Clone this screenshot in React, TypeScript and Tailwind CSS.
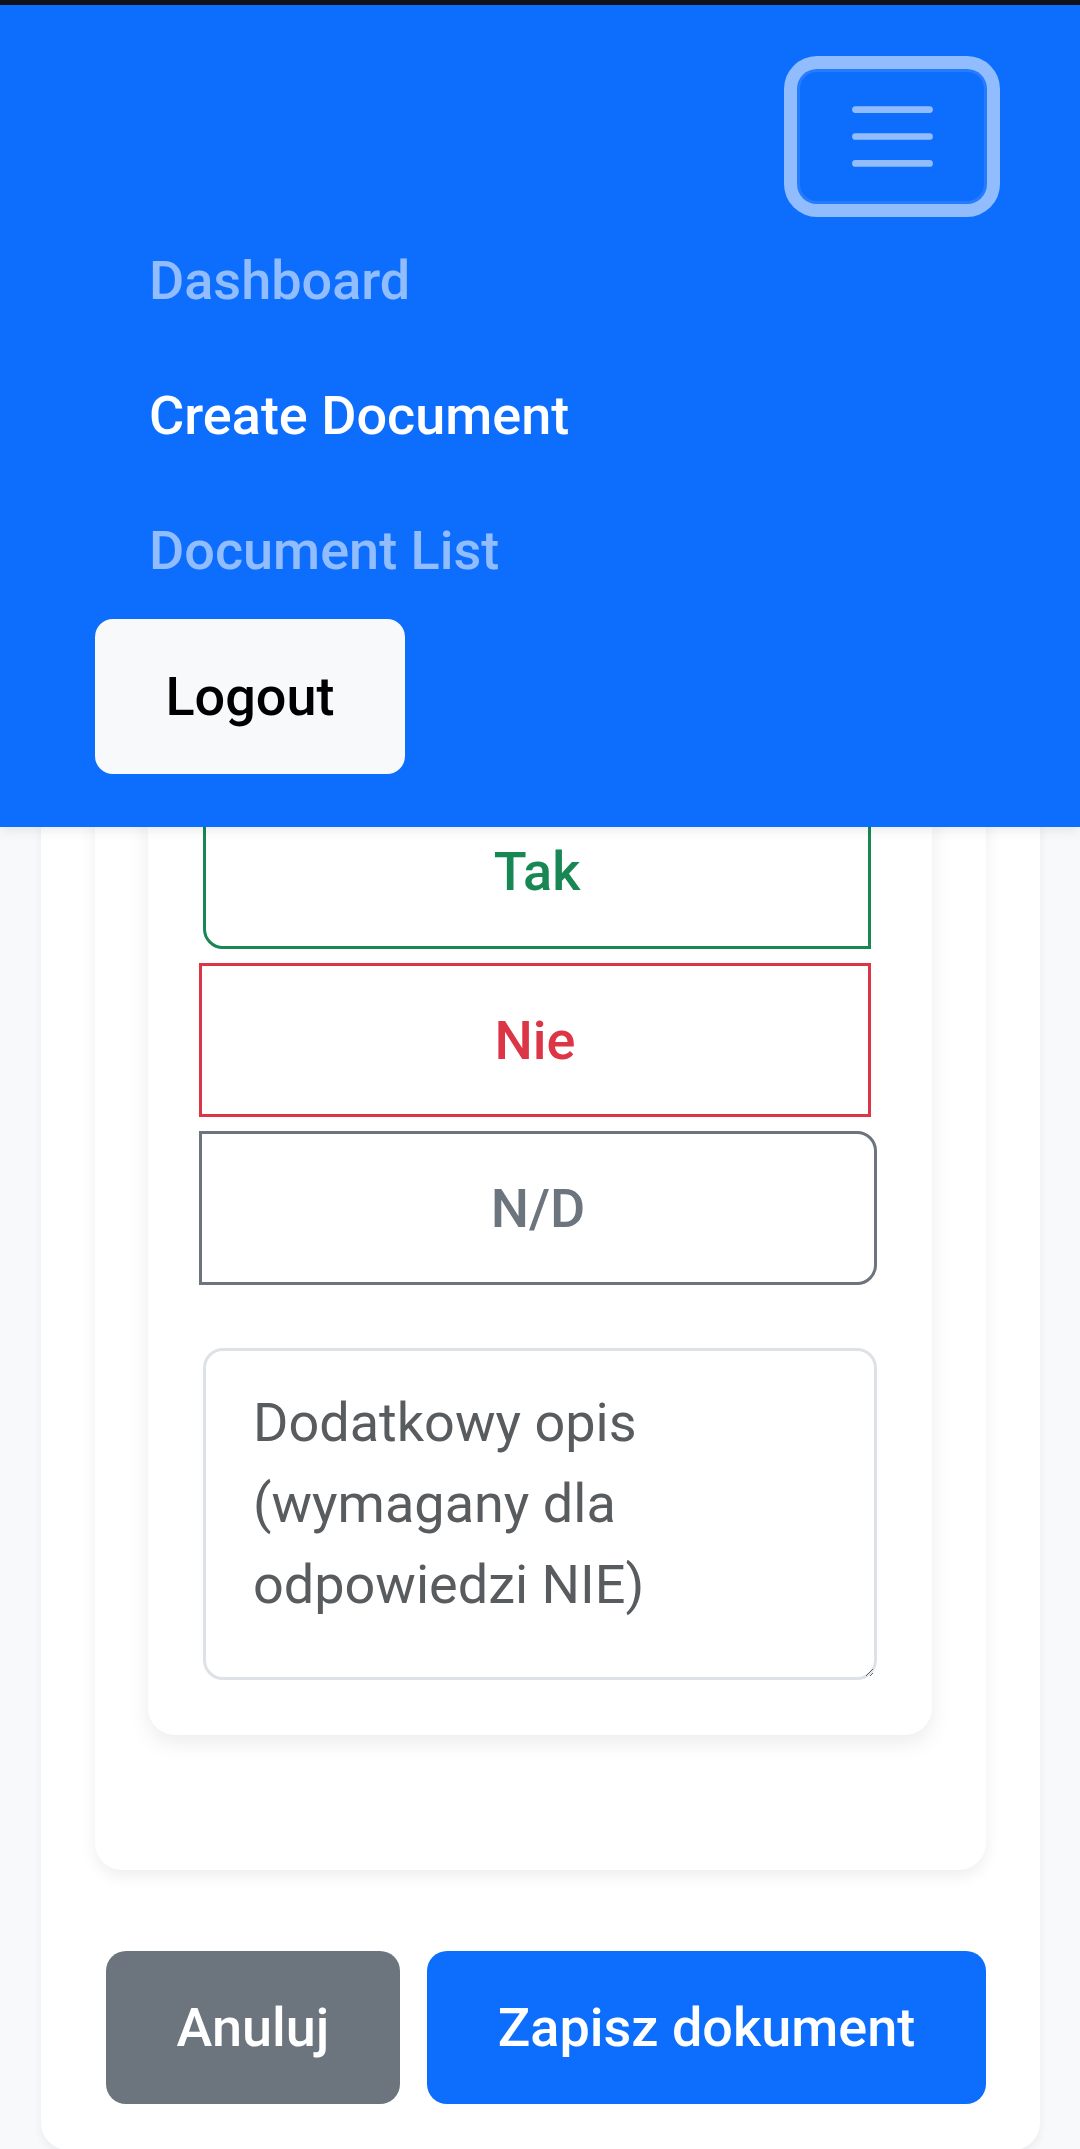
export default function App() {
  const linkBase = "pl-[54px] py-[27px] text-[54px] leading-[81px] font-medium";
  return (
    <div className="min-h-[2149px] bg-[#f8f9fa] font-['Roboto','Liberation_Sans',sans-serif] overflow-hidden">
      <div className="h-[5px] bg-[#10131a]" />
      <nav className="relative z-10 bg-[#0d6efd] pt-[64px] pb-[53px] pl-[95px] pr-[93px] shadow-[0_4px_12px_rgba(0,0,0,0.08)]">
        <div className="flex justify-end">
          <button className="w-[190px] h-[135px] flex items-center justify-center rounded-[20px] border-[3px] border-[rgba(255,255,255,0.1)] shadow-[0_0_0_13px_rgba(255,255,255,0.55)]">
            <svg width="101" height="101" viewBox="0 0 30 30" fill="none">
              <path
                d="M4 7h22M4 15h22M4 23h22"
                stroke="rgba(255,255,255,0.55)"
                strokeWidth="2"
                strokeLinecap="round"
                strokeMiterlimit="10"
              />
            </svg>
          </button>
        </div>
        <ul className="mt-[9px]">
          <li className={`${linkBase} text-[rgba(255,255,255,0.55)]`}>Dashboard</li>
          <li className={`${linkBase} text-white`}>Create Document</li>
          <li className={`${linkBase} text-[rgba(255,255,255,0.55)]`}>Document List</li>
        </ul>
        <button className="mt-px w-[310px] h-[155px] rounded-[18px] bg-[#f8f9fa] text-black text-[54px] leading-[81px] font-medium">
          Logout
        </button>
      </nav>

      <main className="relative -mt-[196px] pl-[41px] pr-[40px]">
        <div className="rounded-[27px] bg-white shadow-[0_4px_10px_rgba(0,0,0,0.06)] pt-[54px] px-[54px] pb-[46px]">
          <div className="rounded-[27px] bg-white shadow-[0_6px_16px_rgba(0,0,0,0.07)] pt-[54px] pl-[53px] pr-[54px] pb-[135px]">
            <div className="rounded-[27px] bg-white shadow-[0_8px_22px_rgba(0,0,0,0.08)] pt-[54px] pl-[51px] pr-[55px] pb-[55px]">
              <div className="flex flex-col">
                <div className="ml-[4px] mr-[6px] h-[156px] flex items-center justify-center border-[3px] border-[#198754] rounded-bl-[20px] text-[#198754] text-[54px] leading-[81px] font-medium">
                  Tak
                </div>
                <div className="mt-[14px] mr-[6px] h-[154px] flex items-center justify-center border-[3px] border-[#dc3545] text-[#dc3545] text-[54px] leading-[81px] font-medium">
                  Nie
                </div>
                <div className="mt-[14px] h-[154px] flex items-center justify-center border-[3px] border-[#6c757d] rounded-r-[20px] text-[#6c757d] text-[54px] leading-[81px] font-medium">
                  N/D
                </div>
              </div>
              <textarea
                className="mt-[63px] ml-[4px] block w-[calc(100%-4px)] h-[332px] border-[3px] border-[#dee2e6] rounded-[20px] pt-[31px] pl-[47px] pr-[50px] text-[54px] leading-[81px] text-[#212529] placeholder:text-[#595c5f] bg-white outline-none"
                placeholder="Dodatkowy opis (wymagany dla odpowiedzi NIE)"
              />
            </div>
          </div>
          <div className="mt-[81px] flex justify-end gap-[27px]">
            <button className="w-[294px] h-[153px] rounded-[20px] bg-[#6c757d] text-white text-[54px] leading-[81px] font-medium">
              Anuluj
            </button>
            <button className="w-[559px] h-[153px] rounded-[20px] bg-[#0d6efd] text-white text-[54px] leading-[81px] font-medium">
              Zapisz dokument
            </button>
          </div>
        </div>
      </main>
    </div>
  );
}
